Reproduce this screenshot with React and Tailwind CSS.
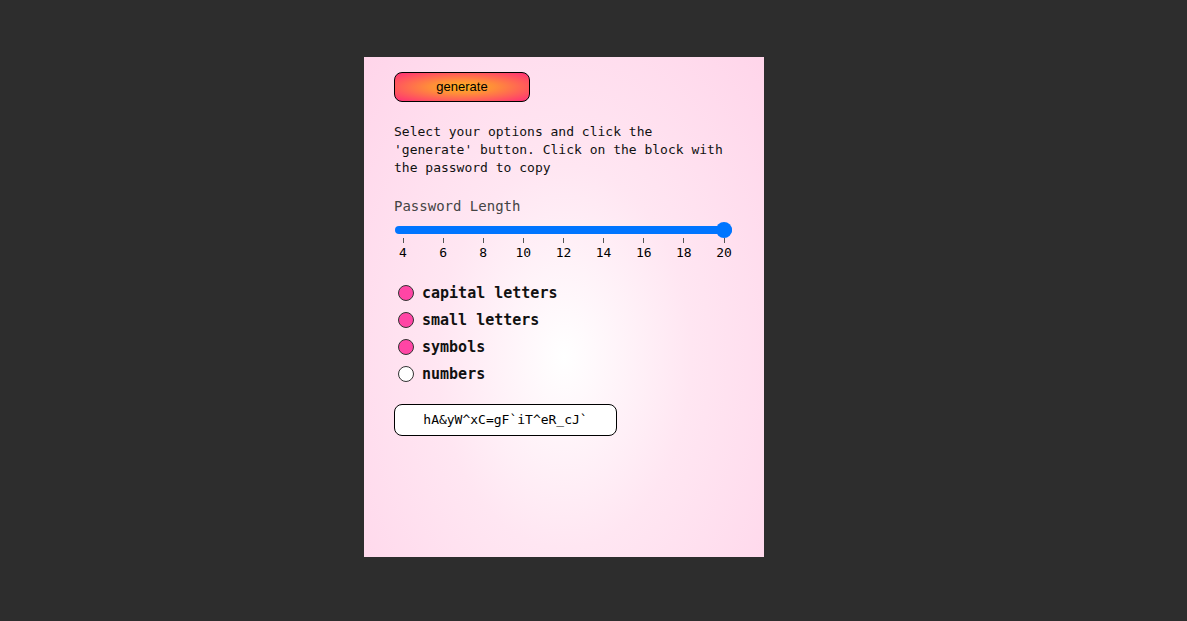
const ticks = [4, 6, 8, 10, 12, 14, 16, 18, 20];

const options = [
  { label: "capital letters", checked: true },
  { label: "small letters", checked: true },
  { label: "symbols", checked: true },
  { label: "numbers", checked: false },
];

function LengthSlider() {
  return (
    <div className="relative ml-[1px] w-[337px]">
      <div className="flex h-4 items-center">
        <div className="relative h-2 w-full rounded-full bg-[#0075ff]">
          <div className="absolute right-[0px] top-1/2 h-4 w-4 -translate-y-1/2 rounded-full bg-[#0075ff]" />
        </div>
      </div>
      <div className="flex justify-between px-[8px]">
        {ticks.map((t) => (
          <div key={t} className="flex w-0 flex-col items-center">
            <div className="h-[5px] w-px bg-[#555]" />
            <span className="mt-[1px] text-[13px] leading-[18px] text-black">{t}</span>
          </div>
        ))}
      </div>
    </div>
  );
}

export default function App() {
  return (
    <div className="flex min-h-screen bg-[#2d2d2d] pl-[364px] pt-[57px] font-['DejaVu_Sans_Mono',monospace]">
      <div className="h-[500px] w-[400px] bg-[radial-gradient(ellipse_at_50%_60%,#ffffff_0%,#ffe6f2_45%,#ffd5ea_100%)] px-[30px] pt-[15px]">
        <button className="h-[30px] w-[136px] rounded-[8px] border border-black bg-[radial-gradient(ellipse_at_center,#ffb41e_0%,#ff8c3a_35%,#ff2d78_100%)] font-['Liberation_Sans',Arial,sans-serif] text-[13px] text-black">
          generate
        </button>

        <p className="mt-[21px] text-[13px] leading-[18px] text-[#111]">
          Select your options and click the 'generate' button. Click on the block with the password to copy
        </p>

        <div className="mt-[20px] text-[14px] leading-[18px] text-[#444]">Password Length</div>

        <div className="mt-[7px]">
          <LengthSlider />
        </div>

        <div className="mt-[22px] flex flex-col gap-[9px]">
          {options.map((o) => (
            <label key={o.label} className="flex h-[18px] items-center gap-[8px] pl-[4px]">
              <span
                className={
                  o.checked
                    ? "h-4 w-4 rounded-full border border-[#333] bg-[#ff45a5]"
                    : "h-4 w-4 rounded-full border border-[#333] bg-white"
                }
              />
              <span className="text-[15px] font-bold leading-[18px] text-[#111]">{o.label}</span>
            </label>
          ))}
        </div>

        <div className="mt-[21px] flex h-[32px] w-[223px] items-center justify-center rounded-[8px] border border-black bg-white text-[13px] text-black">
          hA&amp;yW^xC=gF`iT^eR_cJ`
        </div>
      </div>
    </div>
  );
}
